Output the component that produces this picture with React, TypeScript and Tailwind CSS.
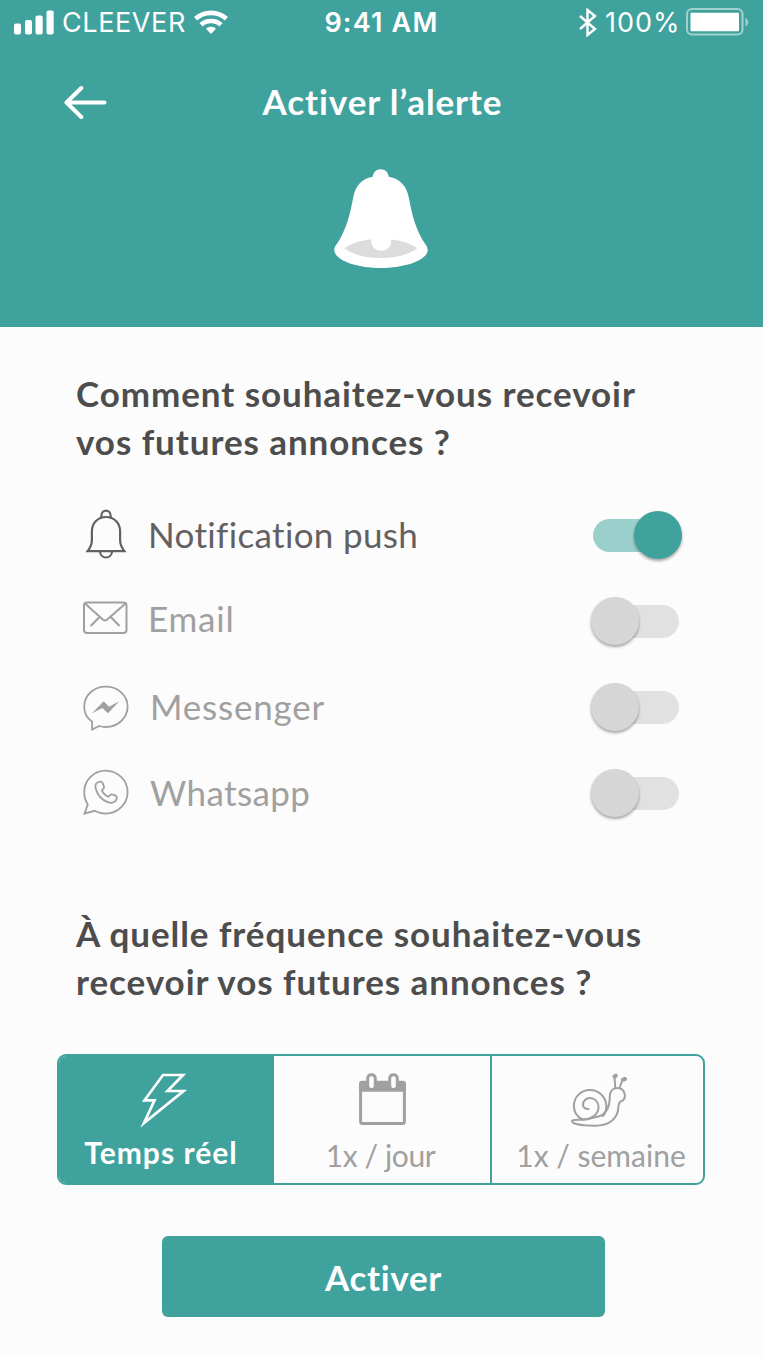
import { useState } from "react";
import clsx from "clsx";

function SignalIcon() {
  return (
    <svg width="40" height="25" viewBox="0 0 40 25" fill="currentColor">
      <rect x="0" y="13.5" width="7" height="11" rx="2" />
      <rect x="11" y="10" width="7" height="14.5" rx="2" />
      <rect x="21.5" y="5.5" width="7.2" height="19" rx="2" />
      <rect x="32.5" y="0.5" width="7.2" height="24" rx="2" />
    </svg>
  );
}

function WifiIcon() {
  return (
    <svg width="34" height="25" viewBox="0 0 34 25" fill="none" stroke="currentColor" strokeWidth="4.6">
      <path d="M1.600 8.800C10 .9 24 .9 32.400 8.800" />
      <path d="M7 14.800c5.500-5 14.500-5 20 0" />
      <path d="M17 24l-5-5.300c2.900-2.500 7.100-2.500 10 0z" fill="currentColor" stroke="none" />
    </svg>
  );
}

function BluetoothIcon() {
  return (
    <svg width="18" height="29" viewBox="0 0 18 29" fill="none" stroke="currentColor" strokeWidth="2.4">
      <path d="M1 8l15 13-7.500 6V2L16 8 1 21" />
    </svg>
  );
}

function BatteryIcon() {
  return (
    <svg width="64" height="28" viewBox="0 0 64 28" fill="none">
      <rect x="1" y="1" width="55.5" height="25.5" rx="5" stroke="white" strokeOpacity="0.5" strokeWidth="2" />
      <rect x="4.5" y="4.7" width="48.5" height="18.6" rx="1" fill="white" />
      <path d="M59.500 10c3.500 1.500 3.500 7 0 8.500z" fill="white" fillOpacity="0.5" />
    </svg>
  );
}

function BigBellIcon() {
  return (
    <svg width="96" height="101" viewBox="0 0 96 101">
      <path
        d="M47.700 1.300c-4.400 0-7.600 3-8 7.500C28 11 22.500 18.500 20.300 29c-2.300 12-4.800 26-13 41.500C4 76 1.300 78.500 1.300 82c0 9.500 20.500 18 46.400 18s47-8.500 47-18c0-3.500-2.700-6-6-11.500C80.500 55 78 41 75.700 29 73.500 18.500 67.500 11 55.700 8.800c-.4-4.500-3.600-7.500-8-7.500z"
        fill="white"
      />
      <path d="M11.300 80.300c9-6.300 21-9.300 36.400-9.300s27.600 3 36.600 9.300c-9 6.700-21.200 9.700-36.600 9.700s-27.400-3-36.400-9.700z" fill="#dcdcdc" />
      <path d="M38.200 68h20v5c0 13-20 13-20 0z" fill="white" />
    </svg>
  );
}

function BellIcon() {
  return (
    <svg width="46" height="50" viewBox="0 0 46 50" fill="none" stroke="currentColor" strokeWidth="2.2">
      <path d="M18.300 9.200v-2c0-7.300 9.400-7.300 9.400 0v2" />
      <path d="M4.600 42.200c3-4 4.300-7 4.300-11V22.500C8.900 14 15 8 23 8s14.100 6 14.100 14.500v8.700c0 4 1.300 7 4.300 11z" />
      <path d="M17 42.500c.3 8 11.700 8 12 0" />
    </svg>
  );
}

function EmailIcon() {
  return (
    <svg width="46" height="34" viewBox="0 0 46 34" fill="none" stroke="currentColor" strokeWidth="2">
      <rect x="1" y="1.5" width="42.5" height="30.5" rx="3" />
      <path d="M2 2.500l17.500 15.700q2.500 2.300 5 0L42.500 2.500M16.300 16.200L7.700 25M28 16.200L36.500 25" />
    </svg>
  );
}

function MessengerIcon() {
  return (
    <svg width="46" height="47" viewBox="0 0 46 47" fill="none" stroke="currentColor" strokeWidth="1.8">
      <path d="M9.100 36.800C4 33.200 1.200 28 1.200 21.800 1.200 10 11 1.600 22.800 1.600S44.600 10.200 44.600 21.500 35 42 22.800 42c-2.500 0-4.500-.3-6.500-1L9.100 44.500z" />
      <path d="M9 28.200l11.700-11.900 5.300 5.400 10.300-5.400L25 28.300l-5.600-5.400z" fill="currentColor" stroke="none" />
    </svg>
  );
}

function WhatsappIcon() {
  return (
    <svg width="46" height="47" viewBox="0 0 46 47" fill="none" stroke="currentColor" strokeWidth="1.8">
      <path d="M4.800 35.500C2.500 32 1.200 28 1.200 23.200 1.200 11 11 1.600 22.800 1.600S44.600 11.200 44.600 23 35 44.600 22.800 44.600c-4.300 0-8-1-11.300-2.800L1.500 44.600z" />
      <path d="M15.500 13c-2.800 1-3.600 3.500-2.800 6.500 1.800 6.500 6.300 11.500 12 13.700 3.500 1.300 8 .5 9-3.500.4-2-.5-3-2-3.500l-3-.8c-1.500-.3-2 1.800-3.300 2.300-2.700-.8-5.800-4-6.400-6.500 1-1.300 2.500-1.700 2-3.300l-1.200-3.500c-.7-1.700-2.500-2-4.300-1.400z" />
    </svg>
  );
}

function BoltIcon() {
  return (
    <svg width="48" height="55" viewBox="0 0 48 55" fill="none" stroke="currentColor" strokeWidth="2.7" strokeMiterlimit="10">
      <path d="M23 2H43L27.500 18H43.500L4 50 14.500 27.300H4.500z" />
    </svg>
  );
}

function CalendarIcon() {
  return (
    <svg width="49" height="53" viewBox="0 0 49 53" fill="none">
      <path d="M4 7.700H45q3 0 3 3V18.700H1v-8q0-3 3-3z" fill="currentColor" />
      <path d="M2.600 16v32.500q0 2 2 2h39.800q2 0 2-2V16" stroke="currentColor" strokeWidth="3" />
      <rect x="9.7" y="1.8" width="7.6" height="14.8" rx="3.5" fill="#fcfcfc" stroke="currentColor" strokeWidth="3" />
      <rect x="31.7" y="1.8" width="7.6" height="14.8" rx="3.5" fill="#fcfcfc" stroke="currentColor" strokeWidth="3" />
    </svg>
  );
}

function SnailIcon() {
  return (
    <svg width="60" height="55" viewBox="0 0 60 55" fill="none" stroke="currentColor" strokeWidth="2" strokeLinecap="round">
      <path d="M12.300 46.300C6.500 43.500 3.900 38 3.900 33c0-9 7-16 16-16s16 7 16.400 15.500c0 5-1 8-3.300 10.500" />
      <path d="M12.300 46.300c9 .5 16.500-5 16.200-12.500-.3-5.500-4-8.800-8.500-8.800-4 0-7 3-7 6.500 0 3 2.500 5 5.500 4.500" />
      <path d="M2 48c0 3 11 4.700 23 4.700 14 0 23.300-6.700 23.500-19.700 0-2 .5-3 1.800-4.200 4-1.500 5.200-5 4.300-8.300-1-3.500-4-5.500-7.500-5.500-4.500 0-7.300 3.500-7.300 8.500 0 12-5 19.500-14.800 20.800-2 .3-5 2.500-12.700 2.500C7 46.800 2 46.500 2 48z" />
      <path d="M45.300 15L44.500 4M49.500 15.200l3-8.200" />
      <path d="M44.500 3.500l1.300-.8M53 6.700l2-.7" strokeWidth="4" />
    </svg>
  );
}

interface ToggleProps {
  on: boolean;
  onClick: () => void;
}

function Toggle({ on, onClick }: ToggleProps) {
  return (
    <button
      type="button"
      role="switch"
      aria-checked={on}
      onClick={onClick}
      className={clsx(
        "flex h-[33px] shrink-0 cursor-pointer items-center rounded-full",
        on ? "w-[86px] justify-end bg-[#9bcfcb]" : "w-[87px] justify-start bg-[#e1e1e1]"
      )}
    >
      <span
        className={clsx(
          "size-12 shrink-0 rounded-full shadow-[0_2px_3px_rgba(0,0,0,0.35)]",
          on ? "-mr-[2.5px] bg-[#40a29d]" : "-ml-[1px] bg-[#d6d6d6]"
        )}
      />
    </button>
  );
}

const CHANNELS = [
  { id: "push", label: "Notification push", Icon: BellIcon, iconClass: "-mt-[3px]", labelClass: "-mt-[2px] pl-[19px] tracking-[0.35px]" },
  { id: "email", label: "Email", Icon: EmailIcon, iconClass: "-mt-[7px]", labelClass: "-mt-[6px] pl-[19px] tracking-[0.8px]" },
  { id: "messenger", label: "Messenger", Icon: MessengerIcon, iconClass: "mt-[2px]", labelClass: "-mt-[2px] pl-[21px] tracking-[0.8px]" },
  { id: "whatsapp", label: "Whatsapp", Icon: WhatsappIcon, iconClass: "-mt-[2px]", labelClass: "-mt-[2px] pl-[21px] tracking-[0.4px]" },
];

const FREQUENCIES = [
  { id: "live", label: "Temps réel", Icon: BoltIcon, className: "w-[215px] pr-[11px]", iconClass: "ml-[5px]", labelClass: "tracking-[1px]" },
  { id: "day", label: "1x / jour", Icon: CalendarIcon, className: "w-[216px]", iconClass: "", labelClass: "-ml-[3px] tracking-[-0.4px]" },
  { id: "week", label: "1x / semaine", Icon: SnailIcon, className: "flex-1 border-l-2 pl-[7px]", iconClass: "-ml-[2px]", labelClass: "" },
];

export default function App() {
  const [channels, setChannels] = useState<string[]>(["push"]);
  const [frequency, setFrequency] = useState("live");

  const toggleChannel = (id: string) => {
    setChannels((c) => (c.includes(id) ? c.filter((x) => x !== id) : [...c, id]));
  };

  return (
    <div className="flex h-[1356px] w-[763px] flex-col overflow-hidden bg-[#fcfcfc] font-['Lato',sans-serif]">
      {/* Header */}
      <header className="h-[327px] shrink-0 bg-[#40a29d] text-white">
        <div className="grid h-[44px] grid-cols-3 items-center whitespace-nowrap font-['Inter',sans-serif] text-[27px]">
          <div className="flex items-center pl-[14px]">
            <SignalIcon />
            <span className="mt-[2px] ml-[8px] w-[124px] tracking-[0.6px]">CLEEVER</span>
            <span className="ml-[8px]">
              <WifiIcon />
            </span>
          </div>
          <div className="mt-[3px] text-center font-semibold tracking-[1.2px]">9:41 AM</div>
          <div className="flex items-center justify-end pr-[13px]">
            <BluetoothIcon />
            <span className="mt-[2px] ml-[8px] w-[74px] tracking-[1px]">100%</span>
            <span className="ml-[7px]">
              <BatteryIcon />
            </span>
          </div>
        </div>
        <div className="mt-[33px] grid h-[48px] grid-cols-[1fr_auto_1fr] items-center">
          <button type="button" aria-label="Retour" className="ml-[64px] cursor-pointer">
            <svg width="44" height="34" viewBox="0 0 44 34" fill="none" stroke="white" strokeWidth="4" strokeLinecap="round" strokeLinejoin="round">
              <path d="M40.500 17.500H3M17.300 3L2.500 17.500 17.300 32" />
            </svg>
          </button>
          <h1 className="-mt-[2px] ml-[2px] text-[35px] font-bold tracking-[0.9px]">Activer l’alerte</h1>
        </div>
        <div className="mt-[43px] mr-[2px] flex justify-center">
          <BigBellIcon />
        </div>
      </header>

      {/* Channels */}
      <h2 className="mt-[42px] ml-[76px] whitespace-nowrap text-[35px]/[48px] font-bold tracking-[0.93px] text-[#4d4d4d]">
        Comment souhaitez-vous recevoir
        <br />
        vos futures annonces ?
      </h2>
      <div className="mt-[27px] mr-[84px] ml-[83px]">
        {CHANNELS.map(({ id, label, Icon, iconClass, labelClass }) => {
          const on = channels.includes(id);
          return (
            <div key={id} className={clsx("flex h-[86px] items-center", on ? "text-[#636061]" : "text-[#a0a0a0]")}>
              <span className={iconClass}>
                <Icon />
              </span>
              <span className={clsx("flex-1 text-[35px]/[48px]", labelClass)}>{label}</span>
              <Toggle on={on} onClick={() => toggleChannel(id)} />
            </div>
          );
        })}
      </div>

      {/* Frequency */}
      <h2 className="mt-[73px] ml-[76px] whitespace-nowrap text-[35px]/[48px] font-bold tracking-[0.93px] text-[#4d4d4d]">
        À quelle fréquence souhaitez-vous
        <br />
        recevoir vos futures annonces ?
      </h2>
      <div className="mt-[49px] ml-[57px] flex h-[131px] w-[648px] shrink-0 overflow-hidden rounded-[9px] border-2 border-[#40a29d]">
        {FREQUENCIES.map(({ id, label, Icon, className, iconClass, labelClass }) => (
          <button
            key={id}
            type="button"
            onClick={() => setFrequency(id)}
            className={clsx(
              "flex cursor-pointer flex-col items-center border-[#40a29d] pt-[17px]",
              className,
              frequency === id ? "bg-[#40a29d] font-bold text-white" : "text-[#a0a0a0]"
            )}
          >
            <span className={clsx("h-[55px]", iconClass)}>
              <Icon />
            </span>
            <span className={clsx("whitespace-nowrap text-[30px]/[40px]", labelClass, frequency === id ? "mt-[4px]" : "mt-[7px]")}>
              {label}
            </span>
          </button>
        ))}
      </div>
      <button
        type="button"
        className="mt-[51px] ml-[162px] h-[81px] w-[443px] shrink-0 cursor-pointer rounded-[6px] bg-[#40a29d] pt-[2px] text-[35px] font-bold tracking-[0.7px] text-white"
      >
        Activer
      </button>
    </div>
  );
}
